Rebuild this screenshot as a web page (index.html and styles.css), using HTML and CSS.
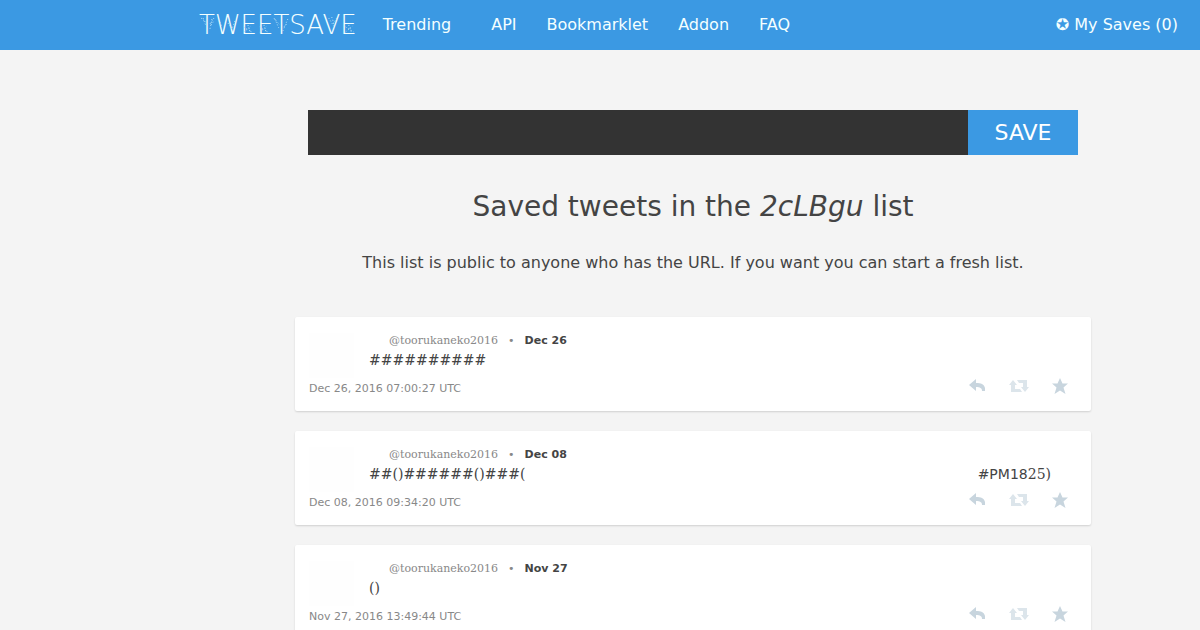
FILE: index.html
```html
<!DOCTYPE html>
<html lang="en">
<head>
    <meta charset="utf-8">
    <title>TweetSave</title>
    <link rel="stylesheet" href="styles.css">
</head>

<body>
    <!-- shared icons -->
    <svg class="sprite" aria-hidden="true">
        <symbol id="reply" viewBox="0 0 17 14"><path d="M7 0v4c5 0 8 1 9 5v3h-3c0-3-2-4-6-4v4L0 6z"/></symbol>
        <symbol id="retweet" viewBox="0 0 20 14"><path d="M4 1l4 5H6v4h5l2 3H2V6H0zM8 1h10v7h2l-4 5-4-5h2V4h-4z"/></symbol>
        <symbol id="star" viewBox="0 0 16 16"><path d="M8 0l2.500 5.500H16l-4.500 4L13.500 16 8 12.500 2.500 16l2-6.500L0 5.500h5.500z"/></symbol>
    </svg>

    <header class="topbar">
        <a class="logo" href="#">TWEETSAVE
            <svg class="specks" viewBox="0 0 158 20" aria-hidden="true">
                <path d="M2 3l6 5M4 3l3 8M13 4l-2 10M15 3l-4 6M12 10l3-4M20 4l3 8M29 8l4 6M36 6l-3 8M45 12l8 5M45 17l7-6M49 10l3 8M61 12l8 5M61 17l7-6M65 10l3 8M75 3l6 7M76 4l4 9M89 4l-5 12M88 9l-4 4M130 3l5 8M138 3l-4 7M133 2l2 6M147 12l8 5M147 17l7-6M150 10l3 8"/>
            </svg>
        </a>
        <nav class="menu">
            <a class="trending" href="#">Trending</a>
            <a href="#">API</a>
            <a href="#">Bookmarklet</a>
            <a href="#">Addon</a>
            <a href="#">FAQ</a>
        </nav>
        <a class="saves" href="#">✪ My Saves (0)</a>
    </header>

    <main class="content">
        <form class="search">
            <input type="text" aria-label="Tweet address">
            <button type="button">SAVE</button>
        </form>
        <h1>Saved tweets in the <em>2cLBgu</em> list</h1>
        <p class="note">This list is public to anyone who has the URL. If you want you can start a fresh list.</p>

        <article class="tweet">
            <div class="head">
                <div class="avatar"></div>
                <div class="body">
                    <div class="author"><a href="#">@toorukaneko2016</a><span>•</span><b>Dec 26</b></div>
                    <p class="text">##########</p>
                </div>
            </div>
            <footer>
                <time>Dec 26, 2016 07:00:27 UTC</time>
                <div class="actions">
                    <a href="#" aria-label="Reply"><svg class="reply"><use href="#reply"/></svg></a>
                    <a href="#" aria-label="Retweet"><svg class="retweet"><use href="#retweet"/></svg></a>
                    <a href="#" aria-label="Favorite"><svg class="star"><use href="#star"/></svg></a>
                </div>
            </footer>
        </article>

        <article class="tweet">
            <div class="head">
                <div class="avatar"></div>
                <div class="body">
                    <div class="author"><a href="#">@toorukaneko2016</a><span>•</span><b>Dec 08</b></div>
                    <p class="text"><span>##()######()###(</span><span><span class="tag">#PM18</span>25)</span></p>
                </div>
            </div>
            <footer>
                <time>Dec 08, 2016 09:34:20 UTC</time>
                <div class="actions">
                    <a href="#" aria-label="Reply"><svg class="reply"><use href="#reply"/></svg></a>
                    <a href="#" aria-label="Retweet"><svg class="retweet"><use href="#retweet"/></svg></a>
                    <a href="#" aria-label="Favorite"><svg class="star"><use href="#star"/></svg></a>
                </div>
            </footer>
        </article>

        <article class="tweet">
            <div class="head">
                <div class="avatar"></div>
                <div class="body">
                    <div class="author"><a href="#">@toorukaneko2016</a><span>•</span><b>Nov 27</b></div>
                    <p class="text">()</p>
                </div>
            </div>
            <footer>
                <time>Nov 27, 2016 13:49:44 UTC</time>
                <div class="actions">
                    <a href="#" aria-label="Reply"><svg class="reply"><use href="#reply"/></svg></a>
                    <a href="#" aria-label="Retweet"><svg class="retweet"><use href="#retweet"/></svg></a>
                    <a href="#" aria-label="Favorite"><svg class="star"><use href="#star"/></svg></a>
                </div>
            </footer>
        </article>
    </main>
</body>
</html>
```
FILE: styles.css
```css
* {
    box-sizing: border-box;
}

html {
    scrollbar-width: none;
}

body {
    margin: 0;
    background: #f4f4f4;
    color: #444;
    font: 16px "DejaVu Sans", sans-serif;
}

a {
    color: inherit;
    text-decoration: none;
}

.sprite {
    display: none;
}

/* top bar */
.topbar {
    display: flex;
    align-items: center;
    height: 50px;
    padding: 0 22px 0 199px;
    background: #3b99e3;
    color: #f4ffff;
    line-height: 18px;
}

.logo {
    position: relative;
    font-size: 26px;
    font-weight: 200;
    line-height: 50px;
}

/* dotted texture over the wordmark */
.specks {
    position: absolute;
    left: 0;
    top: 15px;
    width: 100%;
    height: 20px;
    fill: none;
    stroke: #b4def6;
    stroke-width: 1;
    stroke-dasharray: 1 2;
}

.menu {
    display: flex;
    gap: 30px;
    margin-left: 26px;
}

.trending {
    margin-right: 10px;
}

.saves {
    margin-left: auto;
}

/* page column */
.content {
    max-width: 796px;
    margin: 60px 109px 0 auto;
}

.search {
    display: flex;
    margin: 0 13px;
}

.search input {
    flex: 1;
    height: 45px;
    border: 0;
    padding: 0 12px;
    background: #333;
    color: #fff;
    font-size: 18px;
}

.search button {
    width: 110px;
    border: 0;
    background: #3b99e3;
    color: #fff;
    font: 22px "DejaVu Sans", sans-serif;
}

h1 {
    margin: 35px 0 0;
    font-size: 28px;
    font-weight: normal;
    line-height: 34px;
    text-align: center;
}

.note {
    margin: 29px 0 45px;
    line-height: 19px;
    text-align: center;
}

/* saved tweets */
.tweet {
    margin-bottom: 20px;
    padding: 16px 14px 11px;
    background: #fff;
    border-radius: 2px;
    box-shadow: 0 1px 2px rgba(0, 0, 0, 0.15);
}

.head {
    display: flex;
    gap: 15px;
}

.avatar {
    width: 45px;
    height: 45px;
    background: #fefefe;
}

.body {
    flex: 1;
    padding-top: 1px;
}

.author {
    display: flex;
    gap: 10px;
    padding-left: 20px;
    color: #888;
    font-size: 11px;
    line-height: 14px;
}

.author a {
    font-family: "DejaVu Serif", serif;
}

.author b {
    color: #444;
}

.text {
    display: flex;
    justify-content: space-between;
    margin: 2px 26px 0 0;
    font: 14px/20px "DejaVu Serif", serif;
}

.tag {
    font-family: "DejaVu Sans", sans-serif;
}

.tweet footer {
    display: flex;
    justify-content: space-between;
    align-items: flex-start;
    padding-right: 9px;
    color: #888;
    font-size: 11px;
    line-height: 22px;
}

.actions {
    display: flex;
    align-items: center;
    gap: 23px;
    fill: #c8d5de;
}

.actions svg {
    display: block;
    width: 17px;
    height: 14px;
}

.actions .retweet {
    width: 20px;
    fill: #dce5eb;
}

.actions .star {
    width: 16px;
    height: 16px;
}
```
